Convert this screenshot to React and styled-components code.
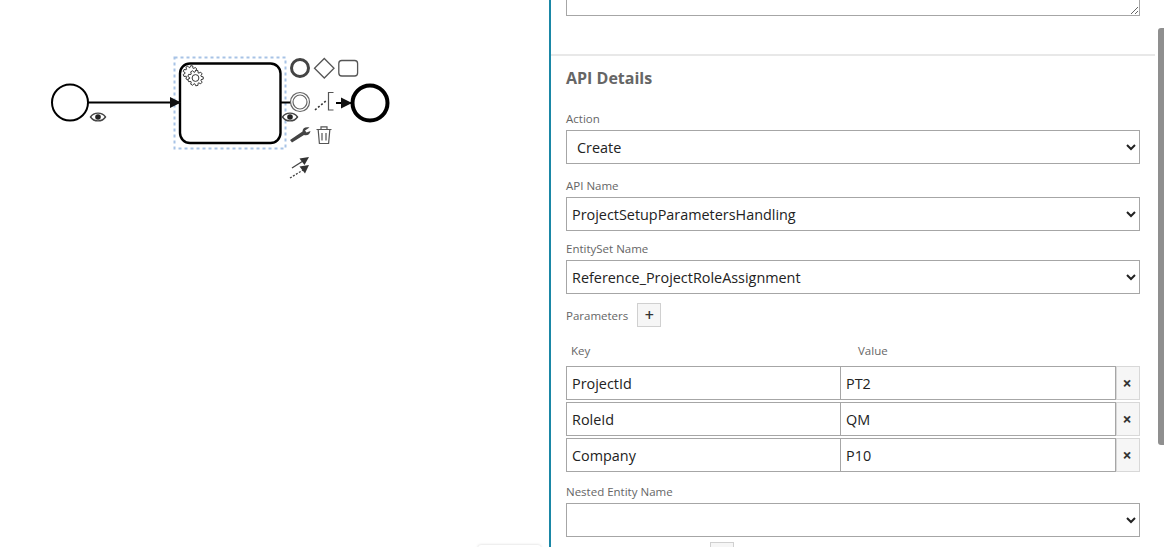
import React from "react";
import styled, { createGlobalStyle } from "styled-components";

const GlobalStyle = createGlobalStyle`
	html, body {
		margin: 0;
		padding: 0;
		height: 100%;
		overflow: hidden;
		background: #fff;
	}
	body {
		font-family: "Open Sans", "Liberation Sans", sans-serif;
	}
`;

// gear outline, computed so the teeth stay even
function gearPath(cx, cy, outer, inner, teeth) {
	const points = [];
	const step = (Math.PI * 2) / teeth;
	for (let i = 0; i < teeth; i++) {
		const a = i * step;
		[
			[a - step * 0.42, inner],
			[a - step * 0.2, outer],
			[a + step * 0.2, outer],
			[a + step * 0.42, inner],
		].forEach(([t, r]) => {
			points.push(`${(cx + Math.cos(t) * r).toFixed(2)} ${(cy + Math.sin(t) * r).toFixed(2)}`);
		});
	}
	return `M${points.join("L")}Z`;
}

function Eye({ x, y }) {
	return (
		<g transform={`translate(${x} ${y})`}>
			<path d="M-7.5 0C-4 -5.2 4 -5.2 7.5 0C4 5.2 -4 5.2 -7.5 0Z" fill="#fff" stroke="#444" strokeWidth="1.4" />
			<circle r="2.8" fill="#222" />
		</g>
	);
}

function Diagram() {
	return (
		<svg width="549" height="547" viewBox="0 0 549 547">
			<defs>
				<marker id="head" markerWidth="12" markerHeight="12" refX="11" refY="6" orient="auto" markerUnits="userSpaceOnUse">
					<path d="M0 0.5L11 6L0 11.5Z" fill="#111" />
				</marker>
			</defs>

			{/* start event and flow into the task */}
			<circle cx="70" cy="102.5" r="18" fill="#fff" stroke="#000" strokeWidth="2" />
			<Eye x={98} y={117} />

			{/* service task */}
			<rect x="174.5" y="57.5" width="111" height="91" fill="none" stroke="#a8c3e6" strokeWidth="2" strokeDasharray="3 3" />
			<rect x="180" y="63.5" width="100.5" height="79.5" rx="10" fill="#fff" stroke="#000" strokeWidth="2.4" />
			<line x1="88" y1="102.5" x2="181" y2="102.5" stroke="#000" strokeWidth="2" markerEnd="url(#head)" />
			<path d={gearPath(190.5, 73, 7.4, 5.4, 9)} fill="#fff" stroke="#222" strokeWidth="0.9" />
			<path d={gearPath(195.5, 78, 7.8, 5.8, 9)} fill="#fff" stroke="#222" strokeWidth="0.9" />
			<circle cx="195.5" cy="78" r="3.4" fill="none" stroke="#222" strokeWidth="0.9" />

			{/* flow to the end event */}
			<line x1="281" y1="102.5" x2="292" y2="102.5" stroke="#000" strokeWidth="2" />
			<line x1="336" y1="103" x2="352" y2="103" stroke="#000" strokeWidth="2" markerEnd="url(#head)" />
			<circle cx="370" cy="103" r="17.5" fill="#fff" stroke="#000" strokeWidth="4" />

			{/* context pad */}
			<circle cx="300" cy="68" r="8.5" fill="none" stroke="#444" strokeWidth="3" />
			<path d="M324.3 58.5L334 68.3L324.3 78L314.5 68.3Z" fill="#fff" stroke="#555" strokeWidth="1.3" />
			<rect x="338.8" y="60.5" width="18.8" height="15.5" rx="3" fill="#fff" stroke="#555" strokeWidth="1.3" />
			<circle cx="300" cy="102" r="9.5" fill="#fff" stroke="#666" strokeWidth="1.2" />
			<circle cx="300" cy="102" r="7" fill="#fff" stroke="#666" strokeWidth="1.2" />
			<Eye x={290} y={117} />
			<line x1="315" y1="110" x2="327" y2="100" stroke="#333" strokeWidth="1.6" strokeDasharray="2 2" />
			<path d="M333.5 92.5H328.5V110H333.5" fill="none" stroke="#555" strokeWidth="1.2" />
			<path
				d="M290 140L302.5 131.5C302.5 128 305.5 126.5 309.5 127.5L305 130.5L306.5 132.5L310.5 131C310 134.5 307 136 304 135L292 142.5Z"
				fill="#444"
			/>
			<path
				d="M316.5 129.5H331.5M321 129V126.8H327V129M318.2 130L319.4 143.5H328.6L329.8 130M322 133V140.5M326 133V140.5"
				fill="none"
				stroke="#555"
				strokeWidth="1.2"
			/>
			<path d="M292 168L303 161" stroke="#444" strokeWidth="1.3" fill="none" />
			<path d="M299.5 158.5L309 157L304.5 165Z" fill="#333" />
			<path d="M290 178L303 170" stroke="#444" strokeWidth="1.3" strokeDasharray="2 1.5" fill="none" />
			<path d="M299.5 166.5L309 165L305 173.5Z" fill="#333" />
		</svg>
	);
}

const Page = styled.div`
	display: flex;
	width: 1164px;
	height: 547px;
	overflow: hidden;
`;

const Canvas = styled.div`
	position: relative;
	flex: 0 0 549px;
	height: 547px;

	svg {
		display: block;
	}
`;

const PeekBox = styled.div`
	position: absolute;
	left: 478px;
	top: 545px;
	width: 63px;
	height: 20px;
	border-radius: 3px;
	background: #fff;
	box-shadow: 0 0 3px rgba(0, 0, 0, 0.18);
`;

const Panel = styled.div`
	flex: 0 0 604px;
	height: 547px;
	border-left: 2px solid #1a87a6;
	overflow: hidden;
`;

const Section = styled.section`
	padding: 0 15px;
`;

const Notes = styled.textarea`
	display: block;
	box-sizing: border-box;
	width: 100%;
	height: 36px;
	margin: -20px 0 38px;
	border: 1px solid #a6a6a6;
	border-radius: 0;
	outline: none;
	background: #fff;
`;

const Divider = styled.div`
	height: 2px;
	background: #e8e8e8;
`;

const Heading = styled.h2`
	margin: 11px 0 0;
	font-size: 16px;
	line-height: 22px;
	font-weight: 700;
	color: #666;
`;

const Label = styled.label`
	display: block;
	margin-top: ${(p) => p.$top}px;
	font-size: 11.5px;
	line-height: 15px;
	color: #666;
`;

const Select = styled.select`
	display: block;
	box-sizing: border-box;
	width: 100%;
	height: 34px;
	margin-top: 4px;
	padding: 0 ${(p) => p.$pad || 1}px;
	border: 1px solid #a6a6a6;
	border-radius: 0;
	outline: none;
	background-color: #fff;
	font-family: inherit;
	font-size: 14.4px;
	color: #222;
`;

const ParamsHead = styled.div`
	display: flex;
	align-items: center;
	gap: 9px;
	margin-top: 9px;
	height: 24px;
`;

const ParamsLabel = styled.span`
	font-size: 11.5px;
	color: #666;
`;

const SquareButton = styled.button`
	display: flex;
	align-items: center;
	justify-content: center;
	box-sizing: border-box;
	flex: 0 0 24px;
	width: 24px;
	height: 24px;
	padding: 0;
	border: 1px solid #d0d0d0;
	background: #f6f6f6;
	font-family: inherit;
	font-size: 16px;
	font-weight: 600;
	color: #333;
`;

const ColumnHeads = styled.div`
	display: grid;
	grid-template-columns: 287px 1fr;
	margin-top: 16px;
	padding-left: 5px;
	font-size: 11.5px;
	line-height: 15px;
	color: #666;
`;

const ParamList = styled.div`
	display: grid;
	gap: 2px;
	margin-top: 8px;
`;

const ParamRow = styled.div`
	display: grid;
	grid-template-columns: 275px 276px 23px;
	height: 34px;
`;

const ParamInput = styled.input`
	box-sizing: border-box;
	width: 100%;
	height: 34px;
	margin-left: ${(p) => (p.$joined ? "-1px" : "0")};
	padding: 0 5px;
	border: 1px solid #a6a6a6;
	border-radius: 0;
	outline: none;
	background: #fff;
	font-family: inherit;
	font-size: 14.4px;
	color: #222;
`;

const RemoveButton = styled.button`
	box-sizing: border-box;
	height: 34px;
	margin-left: -1px;
	padding: 0 2px 0 0;
	border: 1px solid #d8d8d8;
	background: #f6f6f6;
	font-family: inherit;
	font-size: 16px;
	font-weight: 700;
	line-height: 1;
	color: #333;
`;

const TrailingRow = styled.div`
	display: flex;
	margin-top: 5px;
	padding-left: 144px;
`;

const ScrollTrack = styled.div`
	flex: 1;
	display: flex;
	justify-content: flex-end;
	padding-top: 28px;
`;

const ScrollThumb = styled.div`
	width: 6px;
	height: 417px;
	border-radius: 3px 0 0 3px;
	background: #8f8f8f;
`;

const params = [
	{ key: "ProjectId", value: "PT2" },
	{ key: "RoleId", value: "QM" },
	{ key: "Company", value: "P10" },
];

const noop = () => {};

function App() {
	return (
		<Page>
			<GlobalStyle />
			<Canvas>
				<Diagram />
				<PeekBox />
			</Canvas>

			<Panel>
				<Section>
					<Notes readOnly />
				</Section>
				<Divider />
				<Section>
					<Heading>API Details</Heading>

					<Label $top={22}>Action</Label>
					<Select $pad={6} value="Create" onChange={noop}>
						<option>Create</option>
					</Select>

					<Label $top={14}>API Name</Label>
					<Select value="ProjectSetupParametersHandling" onChange={noop}>
						<option>ProjectSetupParametersHandling</option>
					</Select>

					<Label $top={10}>EntitySet Name</Label>
					<Select value="Reference_ProjectRoleAssignment" onChange={noop}>
						<option>Reference_ProjectRoleAssignment</option>
					</Select>

					<ParamsHead>
						<ParamsLabel>Parameters</ParamsLabel>
						<SquareButton>+</SquareButton>
					</ParamsHead>

					<ColumnHeads>
						<span>Key</span>
						<span>Value</span>
					</ColumnHeads>

					<ParamList>
						{params.map(({ key, value }) => (
							<ParamRow key={key}>
								<ParamInput value={key} readOnly />
								<ParamInput $joined value={value} readOnly />
								<RemoveButton>×</RemoveButton>
							</ParamRow>
						))}
					</ParamList>

					<Label $top={12}>Nested Entity Name</Label>
					<Select value="" onChange={noop}>
						<option value=""></option>
					</Select>

					<TrailingRow>
						<SquareButton />
					</TrailingRow>
				</Section>
			</Panel>

			<ScrollTrack>
				<ScrollThumb />
			</ScrollTrack>
		</Page>
	);
}

export default App;
